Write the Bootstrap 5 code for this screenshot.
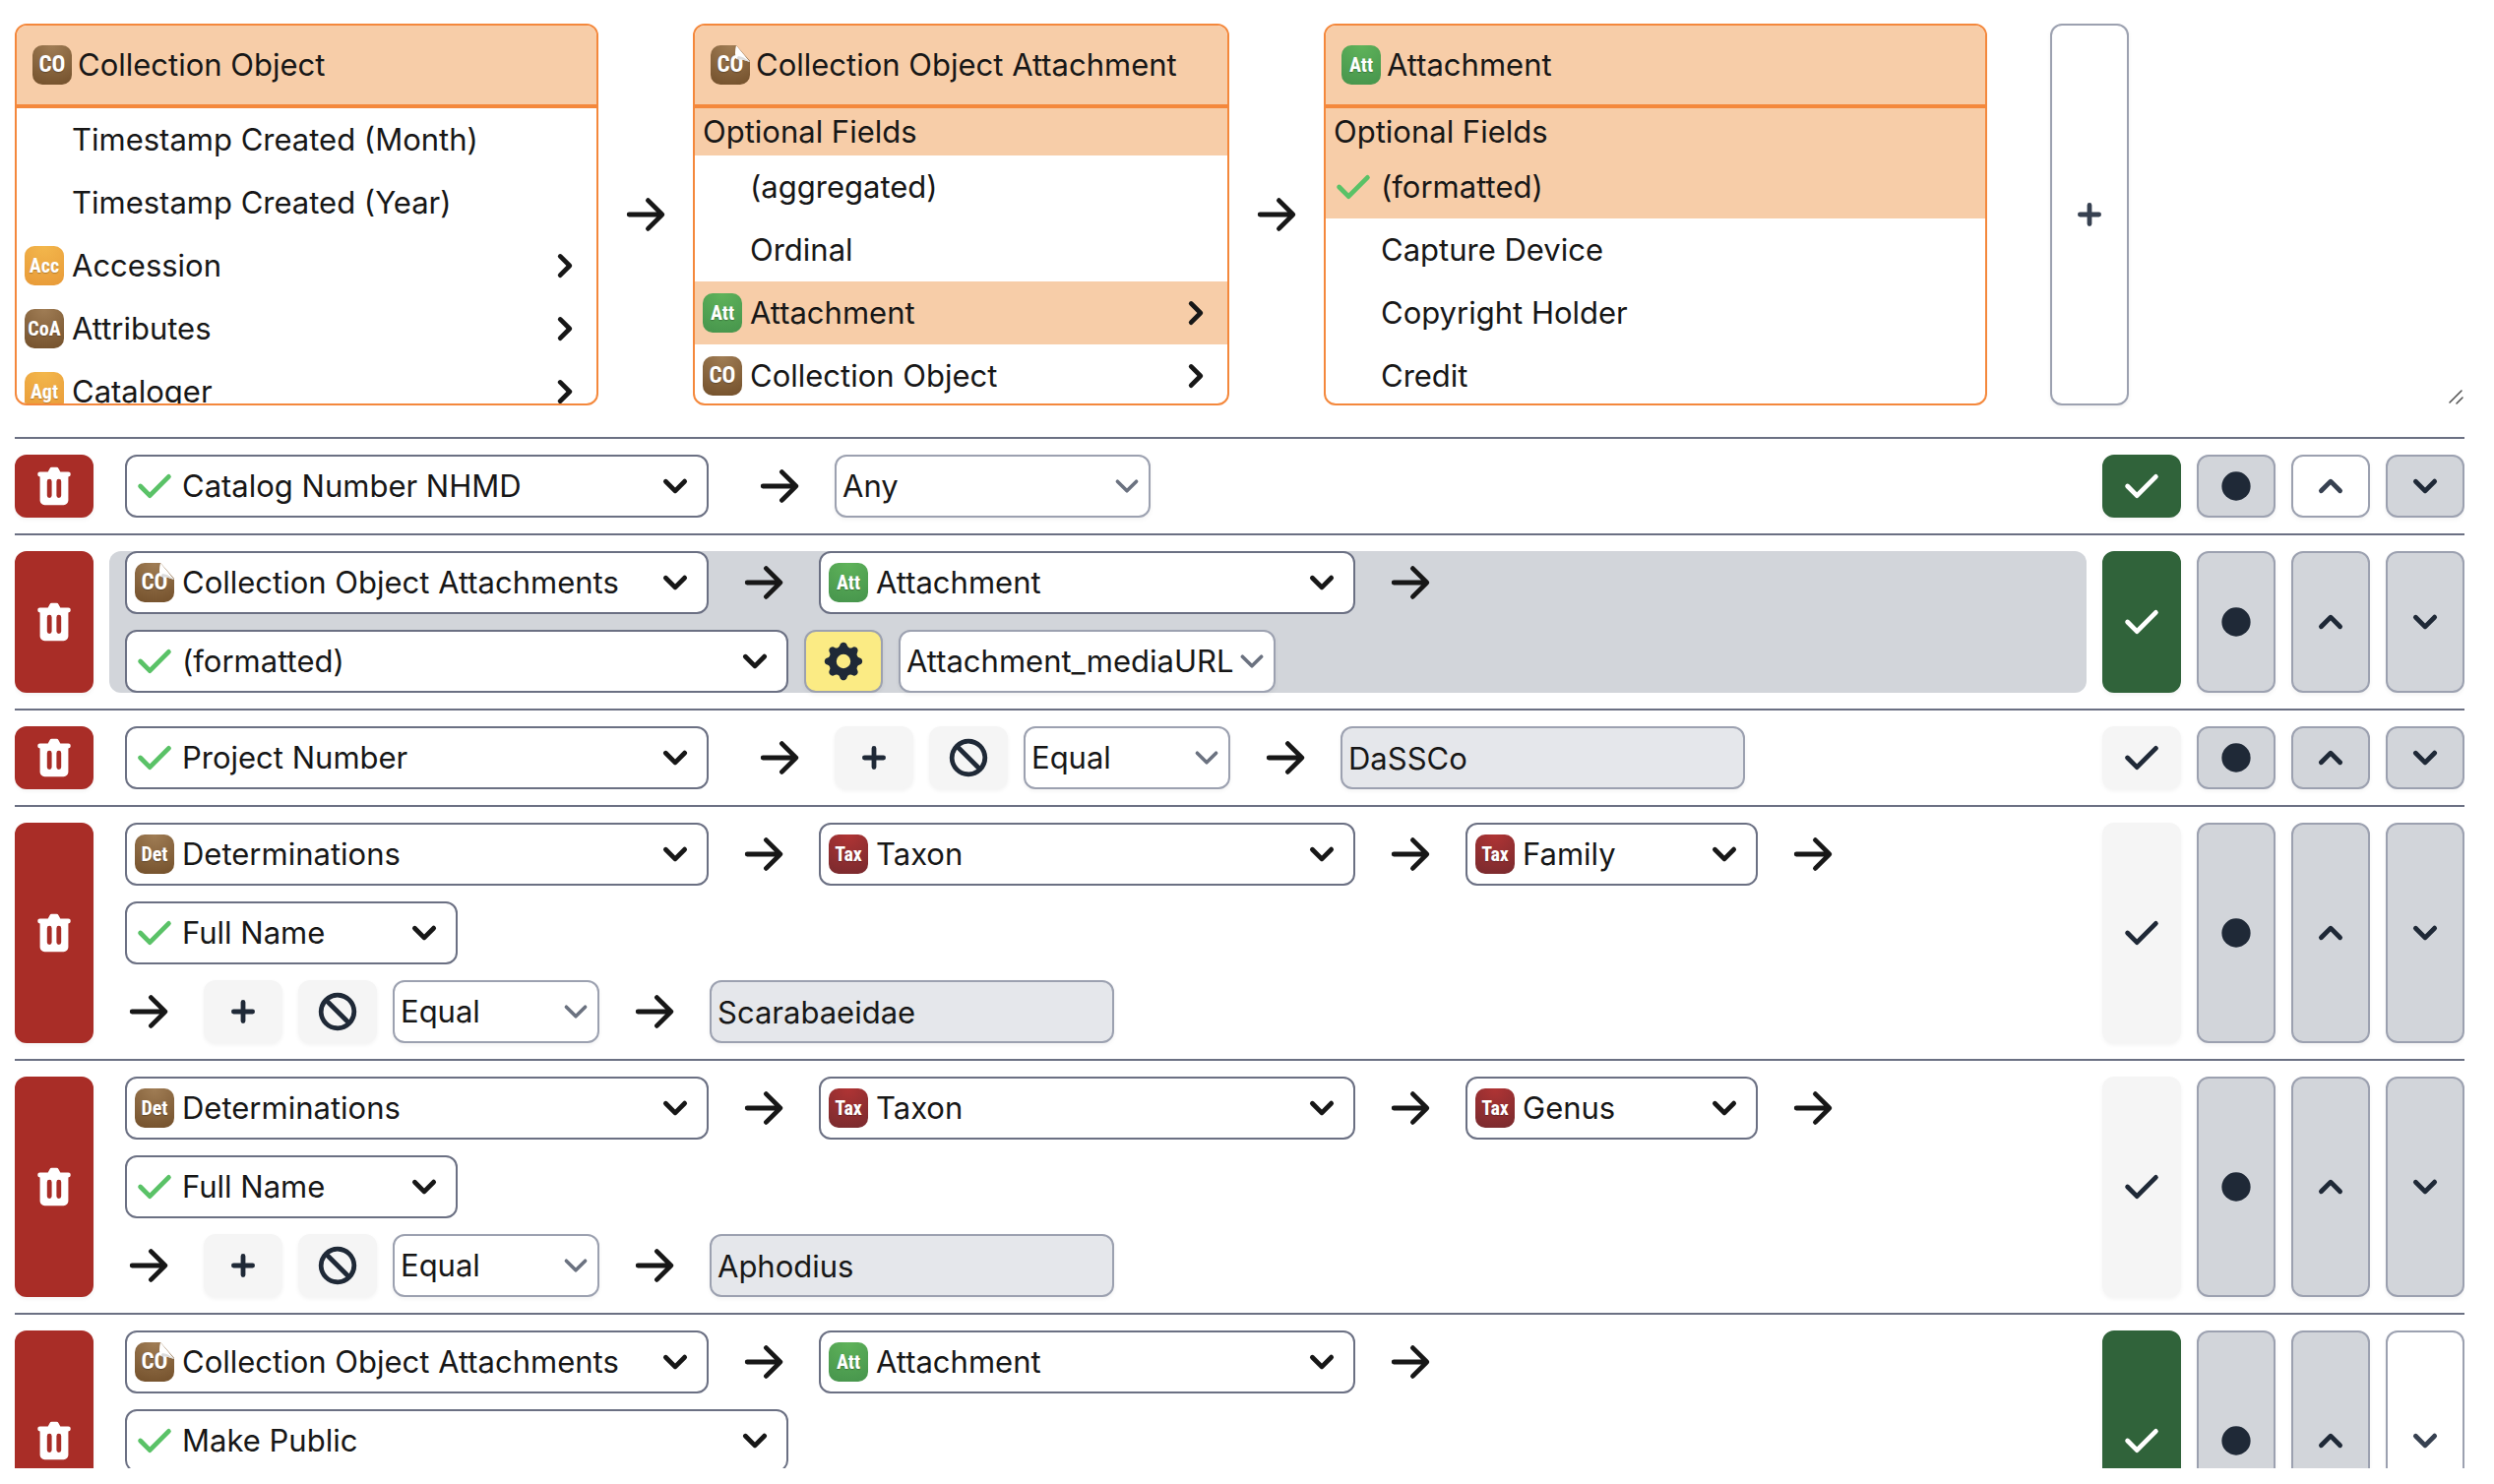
<!DOCTYPE html>
<html lang="en">
<head>
<meta charset="utf-8">
<meta name="viewport" content="width=device-width, initial-scale=1">
<title>Query Builder</title>
<link rel="stylesheet" href="https://cdn.jsdelivr.net/npm/bootstrap@5.3.0/dist/css/bootstrap.min.css">
<style>
  body { font-family: Inter, "Liberation Sans", sans-serif; font-size: 31px; line-height: 48px; color: #171717; background: #fff; }
  .page { height: 100vh; padding: 24px 30px 16px 15px; }
  .ico { width: 48px; height: 48px; flex: none; fill: currentColor; display: block; }
  .tick { color: #5ac267; }
  .g16 { gap: 16px; }

  /* mapping view at the top */
  .mapper { height: 388px; margin-bottom: 32px; }
  .map-box { border: 2px solid #f4883c; border-radius: 12px; overflow: hidden; background: #fff; flex: none; }
  .map-head { height: 84px; padding: 0 16px; gap: 6px; background: #f7cda8; border-bottom: 4px solid #f4883c; }
  .map-group { height: 48px; padding: 0 8px; background: #f7cda8; }
  .map-item { height: 64px; padding: 0 8px 0 4px; gap: 4px; border: 0; background: transparent; color: inherit; text-align: left; width: 100%; }
  .map-item.picked { background: #f7cda8; }
  .map-arrow { width: 96px; flex: none; }
  .grip { right: 0; bottom: 0; width: 18px; height: 18px; }
  .w-xs { width: 210px; } .w-any { width: 321px; } .w-rank { width: 297px; } .w-name { width: 338px; }
  .w-fmt { width: 383px; } .w-value { width: 411px; } .w-table { width: 545px; } .w-base { width: 593px; } .w-field { width: 674px; }

  /* table badges */
  .tbl { width: 40px; height: 40px; border-radius: 10px; flex: none; color: #fff; font: 700 23px/40px "Roboto Condensed", "Open Sans Condensed", Roboto, sans-serif; text-align: center; white-space: nowrap; text-shadow: 0 1px 1px rgba(0,0,0,.25); position: relative; }
  .tbl.three { font-size: 20px; }
  .brown { background: radial-gradient(circle at 50% 0, #a07d55, #73502b); }
  .amber { background: radial-gradient(circle at 50% 0, #f3b74c, #e89a38); }
  .leaf { background: radial-gradient(circle at 50% 0, #5fb35a, #46944c); }
  .wine { background: radial-gradient(circle at 50% 0, #b03434, #782a2e); }
  .folded { clip-path: polygon(0 0, 26px 0, 40px 16px, 40px 40px, 0 40px); }
  .curl { position: absolute; top: 0; right: 0; width: 16px; height: 18px; }
  .slot { width: 48px; flex: none; }

  /* query lines */
  .q-row { border-top: 2px solid #6b7083; padding: 16px 0; }
  .q-btn { width: 80px; min-height: 64px; flex: none; border: 2px solid #9ca1b0; border-radius: 12px; padding: 0; background: #d2d5da; color: #1f2937; box-shadow: 0 2px 4px rgba(0,0,0,.05); }
  .q-btn.white { background: #fff; color: #374151; }
  .q-btn.pale { background: #f5f5f5; border-color: #f5f5f5; }
  .q-btn.green { background: #30633a; border-color: #30633a; color: #fff; }
  .q-btn.red { background: #a92d27; border-color: #a92d27; color: #fff; }
  .q-btn.yellow { background: #fbeb84; }
  .add-btn { margin-left: 64px; }
  .q-line { border-radius: 12px; }
  .q-line.active { background: #d2d5da; }
  .q-path { padding: 0 16px; }
  .q-arrow { padding: 0 16px; height: 64px; }
  .chip { height: 64px; border: 2px solid #6b7083; border-radius: 12px; background: #fff; color: inherit; padding: 0 8px 0 4px; gap: 4px; text-align: left; white-space: nowrap; }
  .q-row .form-select, .q-row .form-control { height: 64px; border: 2px solid #9ca1b0; border-radius: 12px; padding: 0 6px; font-size: 31px; line-height: 48px; color: #171717; box-shadow: 0 2px 4px rgba(0,0,0,.05); }
  .q-row .form-select { background: #fff url("data:image/svg+xml,%3csvg xmlns='http://www.w3.org/2000/svg' fill='none' viewBox='0 0 20 20'%3e%3cpath stroke='%236b7280' stroke-linecap='round' stroke-linejoin='round' stroke-width='1.5' d='M6 8l4 4 4-4'/%3e%3c/svg%3e") no-repeat right center / 48px 48px border-box; }
  .q-row .form-control { background: #e5e7eb; }
  .q-row .w-xs { width: 210px; } .q-row .w-any { width: 321px; } .q-row .w-fmt { width: 383px; } .q-row .w-value { width: 411px; }
</style>
<script src="https://cdn.jsdelivr.net/npm/bootstrap@5.3.0/dist/js/bootstrap.bundle.min.js"></script>
</head>
<body>
<svg class="d-none" aria-hidden="true">
  <symbol id="i-arrow" viewBox="0 0 20 20"><path fill-rule="evenodd" d="M10.293 3.293a1 1 0 011.414 0l6 6a1 1 0 010 1.414l-6 6a1 1 0 01-1.414-1.414L14.586 11H3a1 1 0 110-2h11.586l-4.293-4.293a1 1 0 010-1.414z"/></symbol>
  <symbol id="i-check" viewBox="0 0 20 20"><path fill-rule="evenodd" d="M16.707 5.293a1 1 0 010 1.414l-8 8a1 1 0 01-1.414 0l-4-4a1 1 0 011.414-1.414L8 12.586l7.293-7.293a1 1 0 011.414 0z"/></symbol>
  <symbol id="i-right" viewBox="0 0 20 20"><path fill-rule="evenodd" d="M7.293 14.707a1 1 0 010-1.414L10.586 10 7.293 6.707a1 1 0 011.414-1.414l4 4a1 1 0 010 1.414l-4 4a1 1 0 01-1.414 0z"/></symbol>
  <symbol id="i-down" viewBox="0 0 20 20"><path fill-rule="evenodd" d="M5.293 7.293a1 1 0 011.414 0L10 10.586l3.293-3.293a1 1 0 111.414 1.414l-4 4a1 1 0 01-1.414 0l-4-4a1 1 0 010-1.414z"/></symbol>
  <symbol id="i-up" viewBox="0 0 20 20"><path fill-rule="evenodd" d="M14.707 12.707a1 1 0 01-1.414 0L10 9.414l-3.293 3.293a1 1 0 01-1.414-1.414l4-4a1 1 0 011.414 0l4 4a1 1 0 010 1.414z"/></symbol>
  <symbol id="i-plus" viewBox="0 0 20 20"><path fill-rule="evenodd" d="M10 5a1 1 0 011 1v3h3a1 1 0 110 2h-3v3a1 1 0 11-2 0v-3H6a1 1 0 110-2h3V6a1 1 0 011-1z"/></symbol>
  <symbol id="i-ban" viewBox="0 0 20 20"><path fill-rule="evenodd" d="M13.477 14.89A6 6 0 015.11 6.524l8.367 8.368zm1.414-1.414L6.524 5.11a6 6 0 018.367 8.367zM18 10a8 8 0 11-16 0 8 8 0 0116 0z"/></symbol>
  <symbol id="i-dot" viewBox="0 0 20 20"><circle cx="10" cy="10" r="6.1"/></symbol>
  <symbol id="i-trash" viewBox="0 0 20 20"><path fill-rule="evenodd" d="M9 2a1 1 0 00-.894.553L7.382 4H4a1 1 0 000 2v10a2 2 0 002 2h8a2 2 0 002-2V6a1 1 0 100-2h-3.382l-.724-1.447A1 1 0 0011 2H9zM7 8a1 1 0 012 0v6a1 1 0 11-2 0V8zm5-1a1 1 0 00-1 1v6a1 1 0 102 0V8a1 1 0 00-1-1z"/></symbol>
  <symbol id="i-cog" viewBox="0 0 20 20"><path fill-rule="evenodd" d="M11.49 3.17c-.38-1.56-2.6-1.56-2.98 0a1.532 1.532 0 01-2.286.948c-1.372-.836-2.942.734-2.106 2.106.54.886.061 2.042-.947 2.287-1.561.379-1.561 2.6 0 2.978a1.532 1.532 0 01.947 2.287c-.836 1.372.734 2.942 2.106 2.106a1.532 1.532 0 012.287.947c.379 1.561 2.6 1.561 2.978 0a1.533 1.533 0 012.287-.947c1.372.836 2.942-.734 2.106-2.106a1.533 1.533 0 01.947-2.287c1.561-.379 1.561-2.6 0-2.978a1.532 1.532 0 01-.947-2.287c.836-1.372-.734-2.942-2.106-2.106a1.532 1.532 0 01-2.287-.947zM10 13a3 3 0 100-6 3 3 0 000 6z"/></symbol>
  <symbol id="i-curl" viewBox="0 0 16 18"><path fill="#fff" d="M2 0Q0 8 2 14Q9 14 16 17Z"/><path fill="#dcdcdc" d="M2 14Q9 14 16 17Q9 11 4 11Z"/></symbol>
</svg>

<div class="page d-flex flex-column overflow-hidden">

  <section class="mapper d-flex position-relative" aria-label="Field mapper">
    <div class="map-box w-base">
      <div class="map-head d-flex align-items-center"><span class="tbl brown">CO</span>Collection Object</div>
      <button class="map-item d-flex align-items-center"><span class="slot"></span>Timestamp Created (Month)</button>
      <button class="map-item d-flex align-items-center"><span class="slot"></span>Timestamp Created (Year)</button>
      <button class="map-item d-flex align-items-center"><span class="slot d-flex justify-content-center"><span class="tbl three amber">Acc</span></span>Accession<svg class="ico ms-auto"><use href="#i-right"/></svg></button>
      <button class="map-item d-flex align-items-center"><span class="slot d-flex justify-content-center"><span class="tbl three brown">CoA</span></span>Attributes<svg class="ico ms-auto"><use href="#i-right"/></svg></button>
      <button class="map-item d-flex align-items-center"><span class="slot d-flex justify-content-center"><span class="tbl three amber">Agt</span></span>Cataloger<svg class="ico ms-auto"><use href="#i-right"/></svg></button>
    </div>
    <div class="map-arrow d-flex align-items-center justify-content-center"><svg class="ico"><use href="#i-arrow"/></svg></div>
    <div class="map-box w-table">
      <div class="map-head d-flex align-items-center"><span class="tbl brown folded">CO<svg class="curl"><use href="#i-curl"/></svg></span>Collection Object Attachment</div>
      <div class="map-group">Optional Fields</div>
      <button class="map-item d-flex align-items-center"><span class="slot"></span>(aggregated)</button>
      <button class="map-item d-flex align-items-center"><span class="slot"></span>Ordinal</button>
      <button class="map-item picked d-flex align-items-center"><span class="slot d-flex justify-content-center"><span class="tbl three leaf">Att</span></span>Attachment<svg class="ico ms-auto"><use href="#i-right"/></svg></button>
      <button class="map-item d-flex align-items-center"><span class="slot d-flex justify-content-center"><span class="tbl brown">CO</span></span>Collection Object<svg class="ico ms-auto"><use href="#i-right"/></svg></button>
    </div>
    <div class="map-arrow d-flex align-items-center justify-content-center"><svg class="ico"><use href="#i-arrow"/></svg></div>
    <div class="map-box w-field">
      <div class="map-head d-flex align-items-center"><span class="tbl three leaf">Att</span>Attachment</div>
      <div class="map-group">Optional Fields</div>
      <button class="map-item picked d-flex align-items-center"><svg class="ico tick"><use href="#i-check"/></svg>(formatted)</button>
      <button class="map-item d-flex align-items-center"><span class="slot"></span>Capture Device</button>
      <button class="map-item d-flex align-items-center"><span class="slot"></span>Copyright Holder</button>
      <button class="map-item d-flex align-items-center"><span class="slot"></span>Credit</button>
    </div>
    <button class="q-btn white add-btn d-flex align-items-center justify-content-center" aria-label="Add"><svg class="ico"><use href="#i-plus"/></svg></button>
    <svg class="grip position-absolute" viewBox="0 0 18 18" fill="none" stroke="#555" stroke-width="1.6" stroke-linecap="round" aria-hidden="true"><path d="M3 15L15 3M10 16L16 10"/></svg>
  </section>

  <main class="flex-fill overflow-hidden">
    <div class="q-row d-flex g16">
      <button class="q-btn red d-flex align-items-center justify-content-center" aria-label="Remove"><svg class="ico"><use href="#i-trash"/></svg></button>
      <div class="q-line flex-fill d-flex flex-wrap g16">
        <div class="q-path d-flex flex-wrap g16">
          <button class="chip w-base d-flex align-items-center"><svg class="ico tick"><use href="#i-check"/></svg>Catalog Number NHMD<svg class="ico ms-auto"><use href="#i-down"/></svg></button>
        </div>
        <div class="d-flex g16">
          <span class="q-arrow d-flex align-items-center"><svg class="ico"><use href="#i-arrow"/></svg></span>
          <select class="form-select w-any" aria-label="Filter"><option>Any</option></select>
        </div>
      </div>
      <button class="q-btn green d-flex align-items-center justify-content-center" aria-label="Show in results"><svg class="ico"><use href="#i-check"/></svg></button>
      <button class="q-btn d-flex align-items-center justify-content-center" aria-label="Sort"><svg class="ico"><use href="#i-dot"/></svg></button>
      <button class="q-btn white d-flex align-items-center justify-content-center" aria-label="Move up"><svg class="ico"><use href="#i-up"/></svg></button>
      <button class="q-btn d-flex align-items-center justify-content-center" aria-label="Move down"><svg class="ico"><use href="#i-down"/></svg></button>
    </div>

    <div class="q-row d-flex g16">
      <button class="q-btn red d-flex align-items-center justify-content-center" aria-label="Remove"><svg class="ico"><use href="#i-trash"/></svg></button>
      <div class="q-line active flex-fill d-flex flex-wrap g16">
        <div class="q-path d-flex flex-wrap g16">
          <button class="chip w-base d-flex align-items-center"><span class="slot d-flex justify-content-center"><span class="tbl brown folded">CO<svg class="curl"><use href="#i-curl"/></svg></span></span>Collection Object Attachments<svg class="ico ms-auto"><use href="#i-down"/></svg></button>
          <span class="q-arrow d-flex align-items-center"><svg class="ico"><use href="#i-arrow"/></svg></span>
          <button class="chip w-table d-flex align-items-center"><span class="slot d-flex justify-content-center"><span class="tbl three leaf">Att</span></span>Attachment<svg class="ico ms-auto"><use href="#i-down"/></svg></button>
          <span class="q-arrow d-flex align-items-center"><svg class="ico"><use href="#i-arrow"/></svg></span>
          <button class="chip w-field d-flex align-items-center"><svg class="ico tick"><use href="#i-check"/></svg>(formatted)<svg class="ico ms-auto"><use href="#i-down"/></svg></button>
          <button class="q-btn yellow d-flex align-items-center justify-content-center" aria-label="Configure format"><svg class="ico"><use href="#i-cog"/></svg></button>
          <select class="form-select w-fmt" aria-label="Format"><option>Attachment_mediaURL</option></select>
        </div>
      </div>
      <button class="q-btn green d-flex align-items-center justify-content-center" aria-label="Show in results"><svg class="ico"><use href="#i-check"/></svg></button>
      <button class="q-btn d-flex align-items-center justify-content-center" aria-label="Sort"><svg class="ico"><use href="#i-dot"/></svg></button>
      <button class="q-btn d-flex align-items-center justify-content-center" aria-label="Move up"><svg class="ico"><use href="#i-up"/></svg></button>
      <button class="q-btn d-flex align-items-center justify-content-center" aria-label="Move down"><svg class="ico"><use href="#i-down"/></svg></button>
    </div>

    <div class="q-row d-flex g16">
      <button class="q-btn red d-flex align-items-center justify-content-center" aria-label="Remove"><svg class="ico"><use href="#i-trash"/></svg></button>
      <div class="q-line flex-fill d-flex flex-wrap g16">
        <div class="q-path d-flex flex-wrap g16">
          <button class="chip w-base d-flex align-items-center"><svg class="ico tick"><use href="#i-check"/></svg>Project Number<svg class="ico ms-auto"><use href="#i-down"/></svg></button>
        </div>
        <div class="d-flex g16">
          <span class="q-arrow d-flex align-items-center"><svg class="ico"><use href="#i-arrow"/></svg></span>
          <button class="q-btn pale d-flex align-items-center justify-content-center" aria-label="Or"><svg class="ico"><use href="#i-plus"/></svg></button>
          <button class="q-btn pale d-flex align-items-center justify-content-center" aria-label="Negate"><svg class="ico"><use href="#i-ban"/></svg></button>
          <select class="form-select w-xs" aria-label="Filter"><option>Equal</option></select>
          <span class="q-arrow d-flex align-items-center"><svg class="ico"><use href="#i-arrow"/></svg></span>
          <input class="form-control w-value" type="text" value="DaSSCo" aria-label="Value">
        </div>
      </div>
      <button class="q-btn pale d-flex align-items-center justify-content-center" aria-label="Show in results"><svg class="ico"><use href="#i-check"/></svg></button>
      <button class="q-btn d-flex align-items-center justify-content-center" aria-label="Sort"><svg class="ico"><use href="#i-dot"/></svg></button>
      <button class="q-btn d-flex align-items-center justify-content-center" aria-label="Move up"><svg class="ico"><use href="#i-up"/></svg></button>
      <button class="q-btn d-flex align-items-center justify-content-center" aria-label="Move down"><svg class="ico"><use href="#i-down"/></svg></button>
    </div>

    <div class="q-row d-flex g16">
      <button class="q-btn red d-flex align-items-center justify-content-center" aria-label="Remove"><svg class="ico"><use href="#i-trash"/></svg></button>
      <div class="q-line flex-fill d-flex flex-wrap g16">
        <div class="q-path d-flex flex-wrap g16">
          <button class="chip w-base d-flex align-items-center"><span class="slot d-flex justify-content-center"><span class="tbl three brown">Det</span></span>Determinations<svg class="ico ms-auto"><use href="#i-down"/></svg></button>
          <span class="q-arrow d-flex align-items-center"><svg class="ico"><use href="#i-arrow"/></svg></span>
          <button class="chip w-table d-flex align-items-center"><span class="slot d-flex justify-content-center"><span class="tbl three wine">Tax</span></span>Taxon<svg class="ico ms-auto"><use href="#i-down"/></svg></button>
          <span class="q-arrow d-flex align-items-center"><svg class="ico"><use href="#i-arrow"/></svg></span>
          <button class="chip w-rank d-flex align-items-center"><span class="slot d-flex justify-content-center"><span class="tbl three wine">Tax</span></span>Family<svg class="ico ms-auto"><use href="#i-down"/></svg></button>
          <span class="q-arrow d-flex align-items-center"><svg class="ico"><use href="#i-arrow"/></svg></span>
          <button class="chip w-name d-flex align-items-center"><svg class="ico tick"><use href="#i-check"/></svg>Full Name<svg class="ico ms-auto"><use href="#i-down"/></svg></button>
        </div>
        <div class="d-flex g16">
          <span class="q-arrow d-flex align-items-center"><svg class="ico"><use href="#i-arrow"/></svg></span>
          <button class="q-btn pale d-flex align-items-center justify-content-center" aria-label="Or"><svg class="ico"><use href="#i-plus"/></svg></button>
          <button class="q-btn pale d-flex align-items-center justify-content-center" aria-label="Negate"><svg class="ico"><use href="#i-ban"/></svg></button>
          <select class="form-select w-xs" aria-label="Filter"><option>Equal</option></select>
          <span class="q-arrow d-flex align-items-center"><svg class="ico"><use href="#i-arrow"/></svg></span>
          <input class="form-control w-value" type="text" value="Scarabaeidae" aria-label="Value">
        </div>
      </div>
      <button class="q-btn pale d-flex align-items-center justify-content-center" aria-label="Show in results"><svg class="ico"><use href="#i-check"/></svg></button>
      <button class="q-btn d-flex align-items-center justify-content-center" aria-label="Sort"><svg class="ico"><use href="#i-dot"/></svg></button>
      <button class="q-btn d-flex align-items-center justify-content-center" aria-label="Move up"><svg class="ico"><use href="#i-up"/></svg></button>
      <button class="q-btn d-flex align-items-center justify-content-center" aria-label="Move down"><svg class="ico"><use href="#i-down"/></svg></button>
    </div>

    <div class="q-row d-flex g16">
      <button class="q-btn red d-flex align-items-center justify-content-center" aria-label="Remove"><svg class="ico"><use href="#i-trash"/></svg></button>
      <div class="q-line flex-fill d-flex flex-wrap g16">
        <div class="q-path d-flex flex-wrap g16">
          <button class="chip w-base d-flex align-items-center"><span class="slot d-flex justify-content-center"><span class="tbl three brown">Det</span></span>Determinations<svg class="ico ms-auto"><use href="#i-down"/></svg></button>
          <span class="q-arrow d-flex align-items-center"><svg class="ico"><use href="#i-arrow"/></svg></span>
          <button class="chip w-table d-flex align-items-center"><span class="slot d-flex justify-content-center"><span class="tbl three wine">Tax</span></span>Taxon<svg class="ico ms-auto"><use href="#i-down"/></svg></button>
          <span class="q-arrow d-flex align-items-center"><svg class="ico"><use href="#i-arrow"/></svg></span>
          <button class="chip w-rank d-flex align-items-center"><span class="slot d-flex justify-content-center"><span class="tbl three wine">Tax</span></span>Genus<svg class="ico ms-auto"><use href="#i-down"/></svg></button>
          <span class="q-arrow d-flex align-items-center"><svg class="ico"><use href="#i-arrow"/></svg></span>
          <button class="chip w-name d-flex align-items-center"><svg class="ico tick"><use href="#i-check"/></svg>Full Name<svg class="ico ms-auto"><use href="#i-down"/></svg></button>
        </div>
        <div class="d-flex g16">
          <span class="q-arrow d-flex align-items-center"><svg class="ico"><use href="#i-arrow"/></svg></span>
          <button class="q-btn pale d-flex align-items-center justify-content-center" aria-label="Or"><svg class="ico"><use href="#i-plus"/></svg></button>
          <button class="q-btn pale d-flex align-items-center justify-content-center" aria-label="Negate"><svg class="ico"><use href="#i-ban"/></svg></button>
          <select class="form-select w-xs" aria-label="Filter"><option>Equal</option></select>
          <span class="q-arrow d-flex align-items-center"><svg class="ico"><use href="#i-arrow"/></svg></span>
          <input class="form-control w-value" type="text" value="Aphodius" aria-label="Value">
        </div>
      </div>
      <button class="q-btn pale d-flex align-items-center justify-content-center" aria-label="Show in results"><svg class="ico"><use href="#i-check"/></svg></button>
      <button class="q-btn d-flex align-items-center justify-content-center" aria-label="Sort"><svg class="ico"><use href="#i-dot"/></svg></button>
      <button class="q-btn d-flex align-items-center justify-content-center" aria-label="Move up"><svg class="ico"><use href="#i-up"/></svg></button>
      <button class="q-btn d-flex align-items-center justify-content-center" aria-label="Move down"><svg class="ico"><use href="#i-down"/></svg></button>
    </div>

    <div class="q-row d-flex g16">
      <button class="q-btn red d-flex align-items-center justify-content-center" aria-label="Remove"><svg class="ico"><use href="#i-trash"/></svg></button>
      <div class="q-line flex-fill d-flex flex-wrap g16">
        <div class="q-path d-flex flex-wrap g16">
          <button class="chip w-base d-flex align-items-center"><span class="slot d-flex justify-content-center"><span class="tbl brown folded">CO<svg class="curl"><use href="#i-curl"/></svg></span></span>Collection Object Attachments<svg class="ico ms-auto"><use href="#i-down"/></svg></button>
          <span class="q-arrow d-flex align-items-center"><svg class="ico"><use href="#i-arrow"/></svg></span>
          <button class="chip w-table d-flex align-items-center"><span class="slot d-flex justify-content-center"><span class="tbl three leaf">Att</span></span>Attachment<svg class="ico ms-auto"><use href="#i-down"/></svg></button>
          <span class="q-arrow d-flex align-items-center"><svg class="ico"><use href="#i-arrow"/></svg></span>
          <button class="chip w-field d-flex align-items-center"><svg class="ico tick"><use href="#i-check"/></svg>Make Public<svg class="ico ms-auto"><use href="#i-down"/></svg></button>
        </div>
        <div class="d-flex g16">
          <span class="q-arrow d-flex align-items-center"><svg class="ico"><use href="#i-arrow"/></svg></span>
        </div>
      </div>
      <button class="q-btn green d-flex align-items-center justify-content-center" aria-label="Show in results"><svg class="ico"><use href="#i-check"/></svg></button>
      <button class="q-btn d-flex align-items-center justify-content-center" aria-label="Sort"><svg class="ico"><use href="#i-dot"/></svg></button>
      <button class="q-btn d-flex align-items-center justify-content-center" aria-label="Move up"><svg class="ico"><use href="#i-up"/></svg></button>
      <button class="q-btn white d-flex align-items-center justify-content-center" aria-label="Move down"><svg class="ico"><use href="#i-down"/></svg></button>
    </div>
  </main>
</div>
</body>
</html>
